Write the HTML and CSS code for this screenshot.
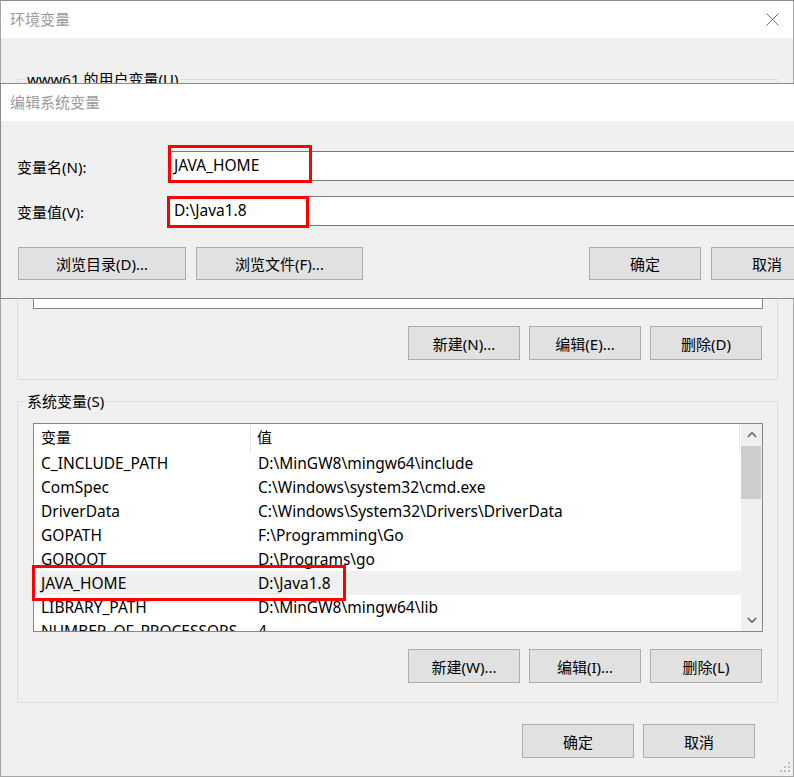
FILE: index.html
```html
<!DOCTYPE html>
<html lang="zh-CN">
<head>
<meta charset="utf-8">
<title>环境变量</title>
<link rel="stylesheet" href="styles.css">
</head>
<body>
<div class="screen">
  <div class="env-window">
    <div class="titlebar">
      <span class="title">环境变量</span>
      <svg class="close-icon" width="13" height="13" viewBox="0 0 13 13"><path d="M0.5 0.5L12.5 12.5M12.5 0.5L0.5 12.5" stroke="#707070" stroke-width="1"/></svg>
    </div>
    <div class="env-body">
      <div class="group group-user">
        <span class="group-label">www61 的用户变量(U)</span>
        <div class="listbox listbox-user"></div>
        <div class="btn-row">
          <button class="btn">新建(N)...</button>
          <button class="btn">编辑(E)...</button>
          <button class="btn">删除(D)</button>
        </div>
      </div>
      <div class="group group-sys">
        <span class="group-label">系统变量(S)</span>
        <div class="listbox listbox-sys">
          <div class="list-content">
            <div class="list-header">
              <span class="hcell hcell-name">变量</span>
              <span class="hcell hcell-value">值</span>
            </div>
            <div class="row"><span class="cell-name">C_INCLUDE_PATH</span><span class="cell-value">D:\MinGW8\mingw64\include</span></div>
            <div class="row"><span class="cell-name">ComSpec</span><span class="cell-value">C:\Windows\system32\cmd.exe</span></div>
            <div class="row"><span class="cell-name">DriverData</span><span class="cell-value">C:\Windows\System32\Drivers\DriverData</span></div>
            <div class="row"><span class="cell-name">GOPATH</span><span class="cell-value">F:\Programming\Go</span></div>
            <div class="row"><span class="cell-name">GOROOT</span><span class="cell-value">D:\Programs\go</span></div>
            <div class="row row-selected"><span class="cell-name">JAVA_HOME</span><span class="cell-value">D:\Java1.8</span></div>
            <div class="row"><span class="cell-name">LIBRARY_PATH</span><span class="cell-value">D:\MinGW8\mingw64\lib</span></div>
            <div class="row"><span class="cell-name">NUMBER_OF_PROCESSORS</span><span class="cell-value">4</span></div>
          </div>
          <div class="scrollbar">
            <div class="sb-arrow">
              <svg width="10" height="7" viewBox="0 0 10 7"><path d="M0.8 6L5 1.8L9.2 6" fill="none" stroke="#606060" stroke-width="1.6"/></svg>
            </div>
            <div class="sb-track"><div class="sb-thumb"></div></div>
            <div class="sb-arrow">
              <svg width="10" height="7" viewBox="0 0 10 7"><path d="M0.8 1L5 5.2L9.2 1" fill="none" stroke="#606060" stroke-width="1.6"/></svg>
            </div>
          </div>
        </div>
        <div class="btn-row">
          <button class="btn">新建(W)...</button>
          <button class="btn">编辑(I)...</button>
          <button class="btn">删除(L)</button>
        </div>
      </div>
      <div class="footer">
        <button class="btn">确定</button>
        <button class="btn">取消</button>
      </div>
    </div>
  </div>

  <svg class="grip" width="12" height="12" viewBox="0 0 12 12">
    <rect x="9" y="0" width="2" height="2" fill="#bdbdbd"/>
    <rect x="5" y="4" width="2" height="2" fill="#bdbdbd"/>
    <rect x="9" y="4" width="2" height="2" fill="#bdbdbd"/>
    <rect x="1" y="8" width="2" height="2" fill="#bdbdbd"/>
    <rect x="5" y="8" width="2" height="2" fill="#bdbdbd"/>
    <rect x="9" y="8" width="2" height="2" fill="#bdbdbd"/>
  </svg>

  <div class="edit-dialog">
    <div class="edit-titlebar">编辑系统变量</div>
    <div class="edit-body">
      <div class="field-row">
        <label class="field-label">变量名(N):</label>
        <div class="field-input">JAVA_HOME</div>
      </div>
      <div class="field-row field-row-second">
        <label class="field-label">变量值(V):</label>
        <div class="field-input">D:\Java1.8</div>
      </div>
      <div class="edit-buttons">
        <button class="btn btn-wide">浏览目录(D)...</button>
        <button class="btn btn-wide btn-wide2">浏览文件(F)...</button>
        <button class="btn btn-ok">确定</button>
        <button class="btn">取消</button>
      </div>
    </div>
  </div>

  <div class="highlight hl-name"></div>
  <div class="highlight hl-value"></div>
  <div class="highlight hl-row"></div>
</div>
</body>
</html>
```

FILE: styles.css
```css
html, body {
  margin: 0;
  padding: 0;
  overflow: hidden;
  background: #f0f0f0;
}

body {
  font-family: "Noto Sans", "Noto Sans CJK SC", sans-serif;
  font-size: 15px;
  color: #000;
}

.screen {
  position: relative;
  width: 794px;
  height: 777px;
}

.env-window {
  box-sizing: border-box;
  width: 794px;
  height: 777px;
  border: 1px solid #a6a6a6;
  border-top-color: #8a8a8a;
  background: #f0f0f0;
  display: flex;
  flex-direction: column;
}

.titlebar {
  height: 37px;
  flex: none;
  background: #fff;
  display: flex;
  align-items: center;
  justify-content: space-between;
  padding: 0 14px 0 9px;
}

.title {
  color: #9b9b9b;
  font-size: 15px;
  line-height: 37px;
}

.close-icon {
  display: block;
}

.env-body {
  flex: 1;
  padding: 41px 15px 0 16px;
}

.group {
  position: relative;
  border: 1px solid #dcdcdc;
  padding: 21px 14px 19px 15px;
}

.group-sys {
  margin-top: 21px;
}

.group-label {
  position: absolute;
  top: -11px;
  left: 7px;
  padding: 0 2px;
  background: #f0f0f0;
  line-height: 20px;
}

.listbox {
  box-sizing: border-box;
  border: 1px solid #828790;
  background: #fff;
}

.listbox-user {
  height: 208px;
}

.listbox-sys {
  height: 209px;
  display: flex;
}

.list-content {
  flex: 1;
  overflow: hidden;
}

.list-header {
  height: 27px;
  display: flex;
  align-items: center;
  padding-left: 7px;
  border-right: 1px solid #e5e5e5;
  margin-right: 1px;
}

.hcell {
  line-height: 27px;
}

.hcell-name {
  width: 209px;
  border-right: 1px solid #e5e5e5;
}

.hcell-value {
  padding-left: 6px;
}

.row {
  height: 24px;
  line-height: 24px;
  margin-left: 5px;
  padding-left: 2px;
  display: flex;
  white-space: nowrap;
  font-size: 15.5px;
}

.row-selected {
  background: #f0f0f0;
}

.cell-name {
  width: 217px;
  flex: none;
}

.scrollbar {
  width: 21px;
  flex: none;
  background: #f0f0f0;
  display: flex;
  flex-direction: column;
}

.sb-arrow {
  height: 21px;
  display: flex;
  align-items: center;
  justify-content: center;
  flex: none;
}

.sb-track {
  flex: 1;
  padding: 1px 1px 0 0;
}

.sb-thumb {
  height: 53px;
  background: #cdcdcd;
}

.btn-row {
  margin-top: 17px;
  display: flex;
  justify-content: flex-end;
  gap: 9px;
  padding-right: 1px;
}

.btn {
  box-sizing: border-box;
  width: 112px;
  height: 34px;
  background: #e1e1e1;
  border: 1px solid #adadad;
  font-family: inherit;
  font-size: 15px;
  color: #000;
  padding: 0;
  margin: 0;
}

.footer {
  margin-top: 21px;
  display: flex;
  justify-content: flex-end;
  gap: 9px;
  padding-right: 23px;
}

.grip {
  position: absolute;
  right: 3px;
  bottom: 3px;
}

/* Edit dialog overlay window */
.edit-dialog {
  position: absolute;
  top: 83px;
  left: 0;
  box-sizing: border-box;
  width: 840px;
  height: 216px;
  border: 1px solid #8a8a8a;
  background: #f0f0f0;
}

.edit-titlebar {
  height: 37px;
  line-height: 37px;
  background: #fff;
  color: #9b9b9b;
  padding-left: 9px;
}

.edit-body {
  padding: 30px 16px 18px 16px;
}

.field-row {
  display: flex;
  align-items: center;
  height: 30px;
}

.field-row-second {
  margin-top: 15px;
}

.field-label {
  width: 151px;
  flex: none;
}

.field-input {
  flex: 1;
  box-sizing: border-box;
  height: 30px;
  line-height: 27px;
  border: 1px solid #7a7a7a;
  background: #fff;
  padding-left: 5px;
  font-size: 15.5px;
}

.edit-buttons {
  margin-top: 21px;
  margin-left: 1px;
  display: flex;
  gap: 10px;
}

.edit-buttons .btn {
  height: 33px;
}

.btn-wide {
  width: 168px;
}

.btn-wide2 {
  width: 167px;
}

.btn-ok {
  margin-left: auto;
}

/* Red annotation boxes */
.highlight {
  position: absolute;
  box-sizing: border-box;
  border: 3px solid #ff0000;
}

.hl-name {
  left: 168px;
  top: 145px;
  width: 144px;
  height: 38px;
}

.hl-value {
  left: 167px;
  top: 196px;
  width: 142px;
  height: 32px;
}

.hl-row {
  left: 32px;
  top: 565px;
  width: 314px;
  height: 36px;
}
```
